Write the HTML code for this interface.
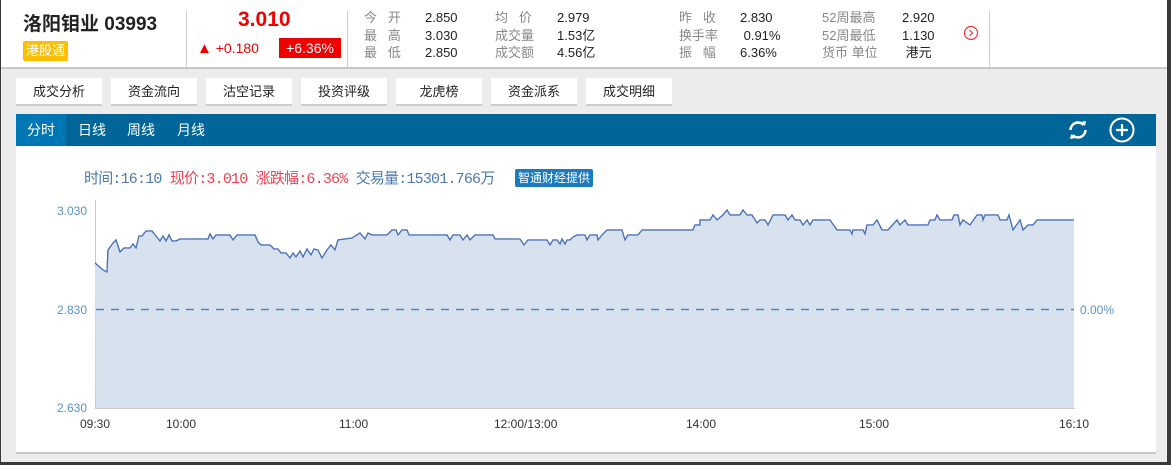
<!DOCTYPE html>
<html><head><meta charset="utf-8"><style>
*{margin:0;padding:0;box-sizing:border-box}
body{width:1171px;height:465px;overflow:hidden;background:#3a3a3a;font-family:"Liberation Sans","Noto Sans CJK SC",sans-serif;position:relative}
#wrap{position:absolute;left:1px;top:0;width:1166px;height:462px;background:#ececec}
.hdr{position:absolute;left:0;top:0;width:1166px;height:69px;background:#fff;border-bottom:2px solid #c8c8c8;border-top:3px solid #fff}
.a{position:absolute;white-space:nowrap}
.sep{position:absolute;top:8px;width:1px;height:56px;background:#ccc}
.lb{color:#888;font-size:13px}
.vl{color:#222;font-size:13px}
.btn{position:absolute;top:78px;width:86px;height:28px;background:#fff;border-bottom:2px solid #ccc;font-size:13px;color:#222;text-align:center;line-height:27px}
.bar{position:absolute;left:15px;top:114px;width:1140px;height:32px;background:#006699}
.tab{position:absolute;top:0;height:32px;line-height:32px;color:#fff;font-size:14px}
.panel{position:absolute;left:15px;top:146px;width:1140px;height:308px;background:#fff;border-bottom:2px solid #c8c8c8}
.ax{position:absolute;color:#5b93c8;font-size:12px}
.tm{position:absolute;color:#333;font-size:12px;top:417px}
</style></head><body>
<div id="wrap">
<div class="hdr">
 <div class="a" style="left:22px;top:6px;font-size:19px;font-weight:bold;color:#222">洛阳钼业 03993</div>
 <div class="a" style="left:22px;top:38px;background:#fbbf00;color:#fff;font-size:13px;padding:1px 3px;border-radius:2px;line-height:18px">港股通</div>
 <div class="sep" style="left:185px"></div>
 <div class="a" style="left:237px;top:5px;font-size:21px;font-weight:bold;color:#e00">3.010</div>
 <div class="a" style="left:196px;top:37px;font-size:14px;color:#e00"><span style="font-size:15px">▲</span> +0.180</div>
 <div class="a" style="left:278px;top:35px;width:62px;height:20px;background:#e00;color:#fff;font-size:14px;text-align:center;line-height:20px">+6.36%</div>
 <div class="sep" style="left:346px"></div>
 <div class="a lb" style="left:363px;top:6px;line-height:17.5px">今&nbsp;&nbsp;&nbsp;开<br>最&nbsp;&nbsp;&nbsp;高<br>最&nbsp;&nbsp;&nbsp;低</div>
 <div class="a vl" style="left:424px;top:6px;line-height:17.5px">2.850<br>3.030<br>2.850</div>
 <div class="a lb" style="left:494px;top:6px;line-height:17.5px">均&nbsp;&nbsp;&nbsp;价<br>成交量<br>成交额</div>
 <div class="a vl" style="left:556px;top:6px;line-height:17.5px">2.979<br>1.53亿<br>4.56亿</div>
 <div class="a lb" style="left:678px;top:6px;line-height:17.5px">昨&nbsp;&nbsp;&nbsp;收<br>换手率<br>振&nbsp;&nbsp;&nbsp;幅</div>
 <div class="a vl" style="left:739px;top:6px;line-height:17.5px">2.830<br>&nbsp;0.91%<br>6.36%</div>
 <div class="a lb" style="left:821px;top:6px;line-height:17.5px">52周最高<br>52周最低<br>货币 单位</div>
 <div class="a vl" style="left:901px;top:6px;line-height:17.5px">2.920<br>1.130<br>&nbsp;港元</div>
 <svg class="a" style="left:962px;top:22px" width="16" height="16"><circle cx="8" cy="8" r="6.5" fill="none" stroke="#e33" stroke-width="1.2"/><path d="M6.5 5l3 3-3 3" fill="none" stroke="#e33" stroke-width="1.2"/></svg>
 <div class="sep" style="left:988px"></div>
</div>
<div class="btn" style="left:15px">成交分析</div>
<div class="btn" style="left:110px">资金流向</div>
<div class="btn" style="left:205px">沽空记录</div>
<div class="btn" style="left:300px">投资评级</div>
<div class="btn" style="left:395px">龙虎榜</div>
<div class="btn" style="left:490px">资金派系</div>
<div class="btn" style="left:585px">成交明细</div>
<div class="bar">
 <div class="tab" style="left:0;width:50px;background:#0077b5;text-align:center">分时</div>
 <div class="tab" style="left:62px">日线</div>
 <div class="tab" style="left:111px">周线</div>
 <div class="tab" style="left:161px">月线</div>
 <svg style="position:absolute;left:1050px;top:4px" width="24" height="24" viewBox="0 0 24 24"><path d="M4.5 12a7.5 7.5 0 0 1 13-5" fill="none" stroke="#fff" stroke-width="2.6"/><path d="M19.5 12a7.5 7.5 0 0 1-13 5" fill="none" stroke="#fff" stroke-width="2.6"/><path d="M15 4l5-1-1 5z" fill="#fff"/><path d="M9 20l-5 1 1-5z" fill="#fff"/></svg>
 <svg style="position:absolute;left:1093px;top:3px" width="26" height="26" viewBox="0 0 26 26"><circle cx="13" cy="13" r="11.5" fill="none" stroke="#fff" stroke-width="2"/><path d="M13 7v12M7 13h12" stroke="#fff" stroke-width="2.2"/></svg>
</div>
<div class="panel"></div>
</div>
<div class="a" style="left:84px;top:167px;font-family:'Liberation Mono','Noto Sans CJK SC',monospace;font-size:15px;color:#4a7ab0;letter-spacing:-0.8px">时间:16:10 <span style="color:#f0404f">现价:3.010 涨跌幅:6.36%</span> 交易量:15301.766万</div>
<div class="a" style="left:515px;top:169px;width:78px;height:18px;background:#1a7bbf;color:#fff;font-size:12px;text-align:center;line-height:18px;border-radius:2px">智通财经提供</div>
<svg class="a" style="left:0;top:0" width="1171" height="465">
<line x1="95.5" y1="200" x2="95.5" y2="409" stroke="#ccc"/>
<line x1="95" y1="408.5" x2="1075" y2="408.5" stroke="#ccc"/>
<path id="p" d="M95 263L103 270L107 272L108 250L113 243L116 240L120 252L124 248L130 248L133 244L136 248L139 236L142 236L146 231L152 231L156 236L160 241L163 236L166 241L169 235L172 241L176 241L180 239L208 239L210 234L213 239L216 235L230 235L233 240L237 235L255 235L258 242L261 245L270 245L274 249L278 249L281 253L286 253L290 258L293 253L296 257L300 251L303 257L307 249L311 255L314 249L318 250L322 258L327 250L331 245L335 250L338 240L345 239L352 238L360 233L365 239L368 233L372 235L387 235L392 230L396 230L398 235L402 230L407 230L409 235L447 235L450 240L453 235L460 235L463 240L467 235L470 240L475 235L477 235L493 235L495 239L520 239L524 245L528 240L547 240L550 245L553 240L557 240L560 244L562 239L565 244L567 240L570 240L573 237L577 235L580 235L585 235L587 240L590 235L597 235L598 240L602 235L607 230L622 230L625 240L628 235L638 235L642 230L693 230L695 225L700 225L700 220L710 220L713 215L717 220L723 215L727 210L730 215L740 215L743 210L747 215L752 215L757 223L760 220L765 220L768 225L773 215L775 215L785 215L788 220L792 215L795 220L800 220L803 225L807 220L810 225L813 220L830 220L837 230L850 230L852 234L853 230L863 230L865 234L867 225L873 225L877 220L882 230L888 230L897 220L900 225L905 220L908 225L928 225L930 220L935 220L937 215L940 220L952 220L954 215L958 215L960 225L963 220L970 225L977 215L982 215L983 220L985 215L998 215L1000 220L1007 220L1009 215L1013 230L1020 220L1023 230L1028 225L1033 225L1037 220L1074 220" fill="none" stroke="#4a72b8" stroke-width="1.3"/>
<path d="M95 263L103 270L107 272L108 250L113 243L116 240L120 252L124 248L130 248L133 244L136 248L139 236L142 236L146 231L152 231L156 236L160 241L163 236L166 241L169 235L172 241L176 241L180 239L208 239L210 234L213 239L216 235L230 235L233 240L237 235L255 235L258 242L261 245L270 245L274 249L278 249L281 253L286 253L290 258L293 253L296 257L300 251L303 257L307 249L311 255L314 249L318 250L322 258L327 250L331 245L335 250L338 240L345 239L352 238L360 233L365 239L368 233L372 235L387 235L392 230L396 230L398 235L402 230L407 230L409 235L447 235L450 240L453 235L460 235L463 240L467 235L470 240L475 235L477 235L493 235L495 239L520 239L524 245L528 240L547 240L550 245L553 240L557 240L560 244L562 239L565 244L567 240L570 240L573 237L577 235L580 235L585 235L587 240L590 235L597 235L598 240L602 235L607 230L622 230L625 240L628 235L638 235L642 230L693 230L695 225L700 225L700 220L710 220L713 215L717 220L723 215L727 210L730 215L740 215L743 210L747 215L752 215L757 223L760 220L765 220L768 225L773 215L775 215L785 215L788 220L792 215L795 220L800 220L803 225L807 220L810 225L813 220L830 220L837 230L850 230L852 234L853 230L863 230L865 234L867 225L873 225L877 220L882 230L888 230L897 220L900 225L905 220L908 225L928 225L930 220L935 220L937 215L940 220L952 220L954 215L958 215L960 225L963 220L970 225L977 215L982 215L983 220L985 215L998 215L1000 220L1007 220L1009 215L1013 230L1020 220L1023 230L1028 225L1033 225L1037 220L1074 220L1074 408L96 408Z" fill="#d8e1ee"/>
<use href="#p"/>
<line x1="96" y1="309.5" x2="1074" y2="309.5" stroke="#4f86c0" stroke-width="1.5" stroke-dasharray="8,7"/>
</svg>
<div class="ax" style="left:57px;top:204px">3.030</div>
<div class="ax" style="left:57px;top:303px">2.830</div>
<div class="ax" style="left:57px;top:401px">2.630</div>
<div class="ax" style="left:1080px;top:303px">0.00%</div>
<div class="tm" style="left:80px">09:30</div>
<div class="tm" style="left:166px">10:00</div>
<div class="tm" style="left:339px">11:00</div>
<div class="tm" style="left:494px">12:00/13:00</div>
<div class="tm" style="left:686px">14:00</div>
<div class="tm" style="left:859px">15:00</div>
<div class="tm" style="left:1059px">16:10</div>
</body></html>
